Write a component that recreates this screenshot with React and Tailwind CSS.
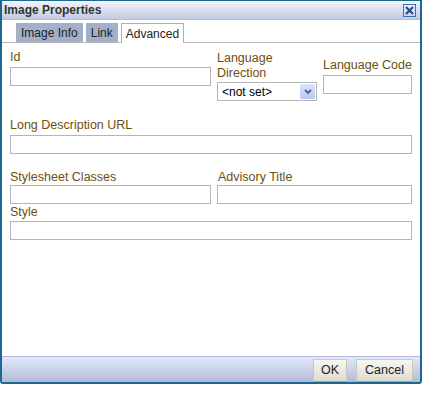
import React from 'react'

const font = { fontFamily: '"Liberation Sans", Arial, sans-serif' }

function Label({ children, className = '' }) {
  return <div className={`text-[12.5px] leading-[15px] text-[#6f4e0e] ${className}`}>{children}</div>
}

function Field({ className = '' }) {
  return <div className={`h-[19px] border border-[#b5b5b5] bg-white ${className}`} />
}

export default function App() {
  return (
    <div className="w-[422px] h-[394px] bg-white" style={font}>
      <div className="flex h-[384px] w-[422px] flex-col overflow-hidden rounded-b-[3px] border-2 border-t border-[#1d6892] bg-white">
        {/* title bar */}
        <div className="flex h-[19px] items-center justify-between border-b border-[#b4bcd4] bg-gradient-to-b from-[#f3f5fb] to-[#c3cae2] pl-[2px] pr-[4px]">
          <span className="text-[12px] font-bold text-[#333]">Image Properties</span>
          <div className="flex h-[13px] w-[13px] items-center justify-center border border-[#3b72ab] bg-gradient-to-b from-[#eef3fc] to-[#c6d6f2]">
            <svg width="9" height="9" viewBox="0 0 9 9">
              <path d="M1 1 L8 8 M8 1 L1 8" stroke="#1f4f8c" strokeWidth="2.2" />
            </svg>
          </div>
        </div>

        {/* tabs */}
        <div className="flex h-[23px] items-end gap-[3px] border-b border-[#b8b8b8] pl-[14px] pt-[3px]">
          <div className="flex h-[19px] items-center bg-[#a4b0ca] px-[5px] text-[12px] text-[#222]">Image Info</div>
          <div className="flex h-[19px] items-center bg-[#a4b0ca] px-[5px] text-[12px] text-[#222]">Link</div>
          <div className="-mb-px flex h-[20px] items-center border border-b-0 border-[#b0b0b0] bg-white px-[4px] text-[12px] text-[#222]">
            Advanced
          </div>
        </div>

        {/* body */}
        <div className="flex-1 px-[8px] pt-[7px]">
          <div className="flex items-start gap-[6px]">
            <div className="w-[201px]">
              <Label className="mb-[2px]">Id</Label>
              <Field />
            </div>
            <div className="mt-[1px] w-[100px]">
              <Label className="mb-px">
                Language
                <br />
                Direction
              </Label>
              <div className="flex h-[19px] items-center justify-between border border-[#b5b5b5] bg-white pl-[4px] pr-px">
                <span className="text-[12px] text-black">&lt;not set&gt;</span>
                <div className="flex h-[15px] w-[15px] items-center justify-center rounded-[2px] bg-gradient-to-b from-[#dbe5fb] to-[#b5c8f2]">
                  <svg width="8" height="6" viewBox="0 0 8 6">
                    <path d="M1 1 L4 4 L7 1" stroke="#4d6185" strokeWidth="1.8" fill="none" />
                  </svg>
                </div>
              </div>
            </div>
            <div className="self-center w-[89px]">
              <Label className="mb-[2px]">Language Code</Label>
              <Field />
            </div>
          </div>

          <div className="mt-[17px]">
            <Label className="mb-[2px]">Long Description URL</Label>
            <Field className="w-[402px]" />
          </div>

          <div className="mt-[16px] flex gap-[6px]">
            <div className="w-[201px]">
              <Label>Stylesheet Classes</Label>
              <Field />
            </div>
            <div className="w-[195px]">
              <Label className="pl-px">Advisory Title</Label>
              <Field />
            </div>
          </div>

          <div className="mt-px">
            <Label className="mb-px">Style</Label>
            <Field className="w-[402px]" />
          </div>
        </div>

        {/* footer */}
        <div className="flex h-[26px] items-end justify-end gap-[9px] border-t border-[#b3bbd8] bg-gradient-to-b from-[#e2e9fb] to-[#b3bad7] pr-[7px]">
          <button className="h-[23px] w-[34px] border border-[#c9c9b8] border-b-[#a6a68e] bg-gradient-to-b from-[#f7f7f2] to-[#dcdcd0] text-[12.5px] text-[#222]">
            OK
          </button>
          <button className="h-[23px] w-[57px] border border-[#c9c9b8] border-b-[#a6a68e] bg-gradient-to-b from-[#f7f7f2] to-[#dcdcd0] text-[12.5px] text-[#222]">
            Cancel
          </button>
        </div>
      </div>
    </div>
  )
}
